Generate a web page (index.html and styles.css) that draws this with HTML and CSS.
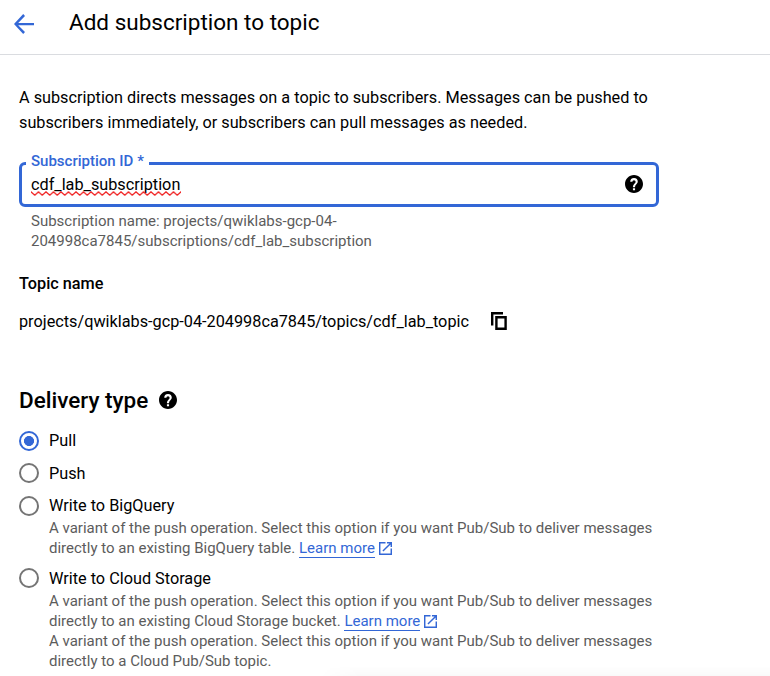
FILE: index.html
```html
<!DOCTYPE html>
<html lang="en">
<head>
<meta charset="utf-8">
<title>Add subscription to topic</title>
<link rel="stylesheet" href="styles.css">
</head>
<body>
<svg width="0" height="0" class="defs">
  <symbol id="help" viewBox="2 2 20 20"><path d="M12 2C6.48 2 2 6.48 2 12s4.480 10 10 10 10-4.480 10-10S17.520 2 12 2zm1.200 17h-2.400v-2.400h2.400V19zm1.900-7.200-.9.920c-.720.730-1 1.380-1 2.780h-2.400v-.5c0-1.100.450-2.100 1.170-2.830l1.240-1.260c.370-.360.590-.860.590-1.410a1.800 1.800 0 0 0-3.600 0H7.800a4.200 4.200 0 0 1 8.400 0c0 .880-.5 1.680-1.100 2.300z"/></symbol>
  <symbol id="open" viewBox="3 3 18 18"><path d="M19 19H5V5h7V3H3v18h18v-9h-2v7zM14 3v2h3.590l-9.830 9.830 1.410 1.410L19 6.410V10h2V3h-7z"/></symbol>
</svg>
<header class="bar">
  <svg class="back" viewBox="0 0 20 20"><path d="M20 9H4.200l6.800-7.100L9.200 0 0 10l9.200 10 1.800-1.900L4.200 11.200H20z"/></svg>
  <h1>Add subscription to topic</h1>
</header>
<main>
  <p class="intro">A subscription directs messages on a topic to subscribers. Messages can be pushed to<br>subscribers immediately, or subscribers can pull messages as needed.</p>
  <div class="field">
    <span class="label">Subscription ID *</span>
    <span class="value">cdf_lab_subscription<svg class="squiggle"><defs><pattern id="wave" width="7.5" height="5" patternUnits="userSpaceOnUse"><path d="M-1.900 2.500L0 .9L3.750 4.100L7.500 .9L9.400 2.500"/></pattern></defs><rect width="150" height="5" fill="url(#wave)"/></svg></span>
    <svg class="help"><use href="#help"/></svg>
  </div>
  <p class="hint">Subscription name: projects/qwiklabs-gcp-04-<br>204998ca7845/subscriptions/cdf_lab_subscription</p>
  <h3>Topic name</h3>
  <div class="topic"><span>projects/qwiklabs-gcp-04-204998ca7845/topics/cdf_lab_topic</span>
    <svg class="copy" viewBox="0 0 16 18"><path d="M1.200 13.500V1.200H12M5.400 5.200h9.200v11.600H5.400z"/></svg>
  </div>
  <h2><span>Delivery type</span><svg class="help"><use href="#help"/></svg></h2>
  <div class="option"><i class="radio on"></i><div class="name">Pull</div></div>
  <div class="option"><i class="radio"></i><div class="name">Push</div></div>
  <div class="option detailed"><i class="radio"></i><div><div class="name">Write to BigQuery</div>
    <p>A variant of the push operation. Select this option if you want Pub/Sub to deliver messages<br>directly to an existing BigQuery table. <a>Learn more</a><svg class="open"><use href="#open"/></svg></p></div></div>
  <div class="option"><i class="radio"></i><div><div class="name">Write to Cloud Storage</div>
    <p>A variant of the push operation. Select this option if you want Pub/Sub to deliver messages<br>directly to an existing Cloud Storage bucket. <a>Learn more</a><svg class="open"><use href="#open"/></svg><br>A variant of the push operation. Select this option if you want Pub/Sub to deliver messages<br>directly to a Cloud Pub/Sub topic.</p></div></div>
</main>
<div class="shade"></div>
</body>
</html>
```
FILE: styles.css
```css
* { box-sizing: border-box; margin: 0; padding: 0; }
body { width: 770px; height: 676px; overflow: hidden; background: #fff; color: #000; font: 16.25px/25px Roboto, sans-serif; white-space: nowrap; }
.defs { position: absolute; }
svg { display: block; flex: none; }
.bar { height: 55px; border-bottom: 1px solid #dadce0; display: flex; align-items: flex-start; padding: 7px 0 0 14px; }
.back { width: 20px; height: 20px; margin-top: 7px; fill: #3367d6; }
h1 { font-size: 22.5px; line-height: 30px; font-weight: 400; margin-left: 35px; }
main { padding: 30px 0 0 19px; }
.field { position: relative; width: 640px; height: 45px; margin-top: 27px; border: 3px solid #3367d6; border-radius: 6px; display: flex; align-items: center; justify-content: space-between; padding: 0 13px 0 9px; }
.label { position: absolute; left: 4px; top: -14px; width: 123px; padding-left: 5px; background: #fff; color: #3367d6; font-size: 15px; line-height: 21px; font-weight: 500; }
.value { position: relative; }
.squiggle { position: absolute; left: 0; top: 19px; width: 150px; height: 5px; }
.squiggle path { fill: none; stroke: #f01c1c; stroke-width: 1.2; }
.help { width: 18px; height: 18px; }
.field .help { margin-bottom: 1px; }
.hint { margin: 4px 0 0 12px; color: #5c5c5c; font-size: 15px; line-height: 20px; }
h3 { font-size: 16.25px; line-height: 24px; font-weight: 500; margin-top: 21px; }
.topic { display: flex; align-items: center; margin-top: 13px; gap: 22px; }
.copy { width: 16px; height: 18px; margin-bottom: 1px; fill: none; stroke: #000; stroke-width: 2.4; }
h2 { display: flex; align-items: center; gap: 11px; font-size: 22.5px; line-height: 30px; font-weight: 500; margin: 51px 0 13px; }
.option { display: flex; gap: 10px; margin-bottom: 8px; }
.radio { flex: none; width: 20px; height: 20px; margin-top: 3px; border: 2px solid #757575; border-radius: 50%; }
.option:nth-of-type(4) .radio { margin-top: 2px; }
.detailed { margin-top: -1px; }
.detailed ~ .option .radio { margin-top: 2px; }
.on { border-color: #3367d6; background: radial-gradient(circle, #3367d6 4.7px, transparent 5.3px); }
.option p { color: #5c5c5c; font-size: 15px; line-height: 20px; }
.option a { color: #3367d6; border-bottom: 1px solid #3367d6; }
.open { display: inline-block; width: 13px; height: 13px; margin-left: 4px; vertical-align: -2px; fill: #3367d6; }
.shade { position: absolute; left: 320px; right: 0; top: 666px; height: 10px; background: linear-gradient(rgba(0,0,0,0), rgba(0,0,0,.025)); -webkit-mask-image: linear-gradient(90deg, transparent, #000 40px); mask-image: linear-gradient(90deg, transparent, #000 40px); }
```
